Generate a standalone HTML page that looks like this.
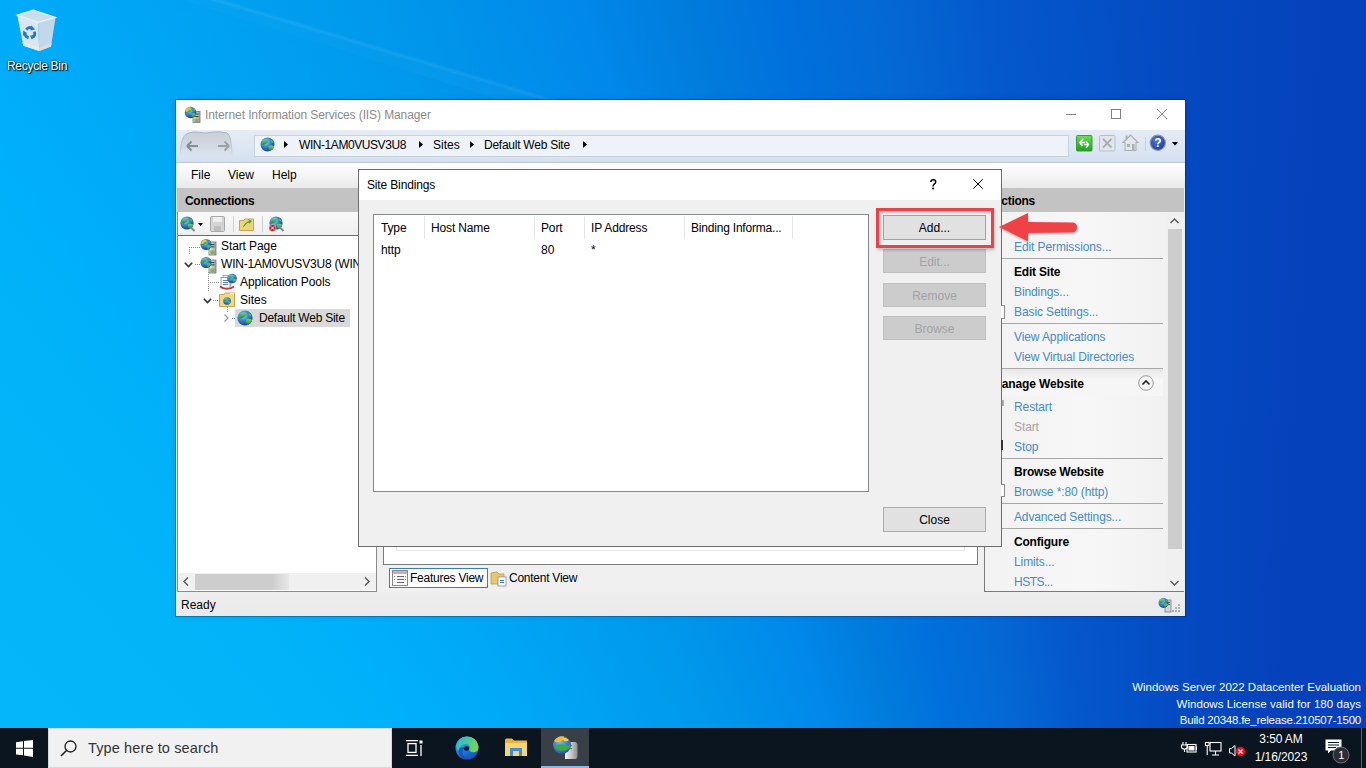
<!DOCTYPE html>
<html><head><meta charset="utf-8">
<style>
*{box-sizing:border-box;margin:0;padding:0}
html,body{width:1366px;height:768px;overflow:hidden}
body{font-family:"Liberation Sans", sans-serif;font-size:12px;color:#000;position:relative;background:#0a78e6}
.a{position:absolute}
.t{position:absolute;white-space:nowrap;line-height:1}
svg.a{overflow:visible}
</style></head><body>
<div class="a" style="left:0px;top:0px;width:1366px;height:728px;background:conic-gradient(from 300deg at 1200px 1800px, #02bafb 0deg, #02b6f9 16deg, #01b3f8 21deg, #00affa 24deg, #00a8f6 28deg, #0097eb 36deg, #0088ea 41deg, #007cdc 44deg, #0070dc 47deg, #0468d4 50deg, #0458cc 53.5deg, #0448c0 60deg, #0442bc 64deg, #0440b8 80deg, #00b8fc 360deg)"></div>
<svg class="a" style="left:0px;top:0px" width="1366" height="728" viewBox="0 0 1366 728"><defs><filter id="blr" x="-10%" y="-50%" width="120%" height="200%"><feGaussianBlur stdDeviation="1.2"/></filter>
<linearGradient id="wedge" x1="0" y1="0" x2="0.3" y2="-1"><stop offset="0" stop-color="#fff" stop-opacity="0"/><stop offset="1" stop-color="#fff" stop-opacity="0.045"/></linearGradient></defs>
<path d="M184 -10 L620 122 L570 122 L150 -10Z" fill="#fff" opacity="0.018"/>
<path d="M190 -8 L600 115" stroke="#fff" stroke-opacity="0.11" stroke-width="2" filter="url(#blr)"/></svg>
<svg class="a" style="left:16px;top:8px" width="42" height="46" viewBox="0 0 42 46">
<path d="M1.2 7.1 L22 14.3 L23.3 42.9 L7.4 37.7 Z" fill="#d9e7f2"/>
<path d="M22 14.3 L39.6 9.4 L35 38.4 L23.3 42.9 Z" fill="#c2d7e8"/>
<path d="M1.2 7.1 L17.5 2.2 L39.6 9.4 L22 14.3 Z" fill="#c9dded" stroke="#eef5fb" stroke-width="1.1"/>
<path d="M6.3 34.5 L23 39.5 L23.3 42.9 L7.4 37.7 Z" fill="#ebe8ea"/>
<path d="M23 39.5 L35.5 35 L35 38.4 L23.3 42.9 Z" fill="#dcdde2"/>
<g fill="none" stroke="#1f78d0" stroke-width="2.8" stroke-linecap="butt">
<path d="M10.2 21.6 A5 5 0 0 1 16.4 20.2"/>
<path d="M18.4 23.6 A5 5 0 0 1 16 29.6"/>
<path d="M12.6 29.8 A5 5 0 0 1 8.8 25.2"/>
</g>
<g fill="#1f78d0"><path d="M15.2 17.6 L19.2 21.4 L14.6 22.6Z"/><path d="M19.8 27.2 L15.6 31.6 L14.2 27.4Z"/><path d="M7 28 L7.2 22.6 L11 25Z"/></g></svg>
<div class="t" style="left:7px;top:59.84px;font-size:12px;color:#fff;text-shadow:0 0 2px #000,1px 1px 1px #000;letter-spacing:-0.3px">Recycle Bin</div>
<div class="t" style="right:5px;top:682.27px;font-size:11.5px;color:#fff;">Windows Server 2022 Datacenter Evaluation</div>
<div class="t" style="right:5px;top:698.77px;font-size:11.5px;color:#fff;letter-spacing:0.05px;">Windows License valid for 180 days</div>
<div class="t" style="right:5px;top:714.77px;font-size:11.5px;color:#fff;letter-spacing:-0.22px;">Build 20348.fe_release.210507-1500</div>
<div class="a" style="left:175px;top:99px;width:1011px;height:518px;background:#f0f0f0;background-clip:padding-box;border:1px solid rgba(0,20,70,0.3);box-shadow:0 0 5px rgba(0,0,0,0.1)"></div>
<div class="a" style="left:176px;top:100px;width:1009px;height:30px;background:#fff"></div>
<div class="t" style="left:205px;top:108.84px;font-size:12px;color:#8a8a8a;letter-spacing:-0.1px;">Internet Information Services (IIS) Manager</div>
<div class="a" style="left:1066px;top:114px;width:10px;height:1px;background:#808080"></div>
<div class="a" style="left:1111px;top:109px;width:10px;height:10px;border:1px solid #808080"></div>
<svg class="a" style="left:1157px;top:109px" width="10" height="10" viewBox="0 0 10 10"><path d="M0 0 L10 10 M10 0 L0 10" stroke="#8a8a8a" stroke-width="1"/></svg>
<div class="a" style="left:176px;top:130px;width:1009px;height:33px;background:linear-gradient(#e6ecf5,#d6e0f0);border-bottom:1px solid #bcc8d6"></div>
<svg class="a" style="left:179px;top:130px" width="56" height="31" viewBox="0 0 56 31"><defs><linearGradient id="nvb" x1="0" y1="0" x2="0" y2="1"><stop offset="0" stop-color="#c9d0d8"/><stop offset="0.6" stop-color="#d3dae3"/><stop offset="1" stop-color="#dbe3ed" stop-opacity="0"/></linearGradient>
<linearGradient id="nvs" x1="0" y1="0" x2="0" y2="1"><stop offset="0" stop-color="#aab2bb"/><stop offset="0.7" stop-color="#c5ccd4"/><stop offset="1" stop-color="#dbe3ed" stop-opacity="0"/></linearGradient></defs>
<path d="M1.5 28 Q0.5 8 8 3.5 Q14 1.2 22 2.5 Q27 3.5 31 2.5 Q41 0.8 48 3 Q53 6 53 28" fill="url(#nvb)" stroke="url(#nvs)" stroke-width="1"/>
<path d="M8 16 L19 16 M8 16 L12.5 11.5 M8 16 L12.5 20.5" stroke="#878d95" stroke-width="2" fill="none"/>
<path d="M50 16 L39 16 M50 16 L45.5 11.5 M50 16 L45.5 20.5" stroke="#9ba1a8" stroke-width="2" fill="none"/></svg>
<div class="a" style="left:254px;top:135px;width:815px;height:22px;background:#eef3f9;border:1px solid #c9d3de"></div>
<svg class="a" style="left:260px;top:137px" width="15" height="15" viewBox="0 0 15 15"><defs><radialGradient id="glg1" cx="38%" cy="32%" r="72%"><stop offset="0" stop-color="#a8dcfa"/><stop offset="0.45" stop-color="#3a8ad6"/><stop offset="1" stop-color="#143c80"/></radialGradient>
<linearGradient id="gll1" x1="0" y1="0" x2="0" y2="1"><stop offset="0" stop-color="#6fd46a"/><stop offset="1" stop-color="#1f8a2a"/></linearGradient></defs>
<circle cx="7.5" cy="7.5" r="7.0" fill="url(#glg1)"/>
<path d="M1.90 5.63 Q4.23 1.90 7.97 2.55 Q9.37 4.23 7.50 6.10 Q5.17 7.78 2.55 7.97Z" fill="url(#gll1)"/>
<path d="M8.43 8.90 Q11.70 7.50 14.13 9.37 Q13.10 13.10 9.83 13.85 Q7.97 11.70 8.43 8.90Z" fill="url(#gll1)"/>
<path d="M10.77 2.37 Q13.10 3.77 13.75 6.10 Q12.17 6.29 10.95 4.70Z" fill="#4fbf4a"/></svg>
<svg class="a" style="left:284px;top:141px" width="4" height="7" viewBox="0 0 4 7"><path d="M0 0 L4 3.5 L0 7Z" fill="#000"/></svg>
<div class="t" style="left:299px;top:138.84px;font-size:12px;color:#000;letter-spacing:-0.43px;">WIN-1AM0VUSV3U8</div>
<svg class="a" style="left:419px;top:141px" width="4" height="7" viewBox="0 0 4 7"><path d="M0 0 L4 3.5 L0 7Z" fill="#000"/></svg>
<div class="t" style="left:433px;top:138.84px;font-size:12px;color:#000;">Sites</div>
<svg class="a" style="left:470px;top:141px" width="4" height="7" viewBox="0 0 4 7"><path d="M0 0 L4 3.5 L0 7Z" fill="#000"/></svg>
<div class="t" style="left:484px;top:138.84px;font-size:12px;color:#000;letter-spacing:-0.25px;">Default Web Site</div>
<svg class="a" style="left:583px;top:141px" width="4" height="7" viewBox="0 0 4 7"><path d="M0 0 L4 3.5 L0 7Z" fill="#000"/></svg>
<svg class="a" style="left:1076px;top:135px" width="17" height="17" viewBox="0 0 17 17"><defs><linearGradient id="grn" x1="0" y1="0" x2="0" y2="1"><stop offset="0" stop-color="#6fdc5a"/><stop offset="1" stop-color="#16a316"/></linearGradient></defs>
<rect x="0.5" y="0.5" width="15.5" height="15.5" rx="1" fill="url(#grn)" stroke="#3b9b3b"/>
<path d="M7 4 L4 7.5 L6.5 11 M4 7.5 L9 7.5" stroke="#fff" stroke-width="1.7" fill="none"/><path d="M10 13 L12.5 9.5 L10 6.5 M12.5 9.5 L8 9.5" stroke="#fff" stroke-width="1.5" fill="none" opacity="0.9"/></svg>
<svg class="a" style="left:1099px;top:135px" width="17" height="17" viewBox="0 0 17 17"><rect x="0.5" y="0.5" width="15.5" height="15.5" rx="1" fill="#e2e6eb" stroke="#b9bfc6"/>
<path d="M4 4 L12.5 12.5 M12.5 4 L4 12.5" stroke="#a8aeb5" stroke-width="1.8"/></svg>
<svg class="a" style="left:1121px;top:133px" width="19" height="19" viewBox="0 0 19 19"><path d="M2 9.5 L9.5 2 L17 9.5 L15 9.5 L15 17.5 L4 17.5 L4 9.5Z" fill="#e4e7ea" stroke="#a9afb5" stroke-width="1.1"/>
<rect x="6" y="11" width="3" height="3" fill="#a9afb5"/><rect x="11" y="11" width="2.5" height="6" fill="#a9afb5"/><rect x="4.5" y="2.5" width="2" height="4" fill="#a9afb5"/></svg>
<div class="a" style="left:1145px;top:137px;width:1px;height:14px;background:#c8d0d8"></div>
<svg class="a" style="left:1149px;top:134px" width="18" height="18" viewBox="0 0 18 18"><defs><radialGradient id="hlp" cx="40%" cy="35%" r="70%"><stop offset="0" stop-color="#4a78d8"/><stop offset="1" stop-color="#1c3d95"/></radialGradient></defs>
<circle cx="8.8" cy="8.8" r="7.6" fill="url(#hlp)" stroke="#8a96b8" stroke-width="1.2"/>
<text x="8.8" y="13.2" font-family="Liberation Sans" font-weight="700" font-size="12" fill="#fff" text-anchor="middle">?</text></svg>
<svg class="a" style="left:1172px;top:142px" width="6" height="4" viewBox="0 0 6 4"><path d="M0 0 L6 0 L3 3.5Z" fill="#000"/></svg>
<div class="a" style="left:176px;top:163px;width:1009px;height:25px;background:linear-gradient(#fefefe,#f6f5f5 50%,#e9e9e9)"></div>
<div class="t" style="left:191px;top:168.84px;font-size:12px;color:#000;">File</div>
<div class="t" style="left:228px;top:168.84px;font-size:12px;color:#000;">View</div>
<div class="t" style="left:272px;top:168.84px;font-size:12px;color:#000;">Help</div>
<div class="a" style="left:176px;top:592px;width:1009px;height:24px;background:linear-gradient(#eeeeee,#e9e9e9)"></div>
<div class="t" style="left:181px;top:598.84px;font-size:12px;color:#000;">Ready</div>
<div class="a" style="left:177px;top:188px;width:200px;height:404px;background:#fff;border:1px solid #8a8a8a;border-top:none"></div>
<div class="a" style="left:177px;top:188px;width:200px;height:24px;background:#c3c3c3"></div>
<div class="t" style="left:185px;top:194.84px;font-size:12px;color:#000;font-weight:700;letter-spacing:-0.3px;">Connections</div>
<div class="a" style="left:178px;top:212px;width:198px;height:24px;background:linear-gradient(#fafafa,#efefef);border-bottom:1px solid #6a6a6a"></div>
<svg class="a" style="left:180px;top:216px" width="16" height="16" viewBox="0 0 16 16"><defs><radialGradient id="glg2" cx="38%" cy="32%" r="72%"><stop offset="0" stop-color="#a8dcfa"/><stop offset="0.45" stop-color="#3a8ad6"/><stop offset="1" stop-color="#143c80"/></radialGradient>
<linearGradient id="gll2" x1="0" y1="0" x2="0" y2="1"><stop offset="0" stop-color="#6fd46a"/><stop offset="1" stop-color="#1f8a2a"/></linearGradient></defs>
<circle cx="7" cy="7" r="6.6" fill="url(#glg2)"/>
<path d="M1.72 5.24 Q3.92 1.72 7.44 2.34 Q8.76 3.92 7.00 5.68 Q4.80 7.26 2.34 7.44Z" fill="url(#gll2)"/>
<path d="M7.88 8.32 Q10.96 7.00 13.25 8.76 Q12.28 12.28 9.20 12.98 Q7.44 10.96 7.88 8.32Z" fill="url(#gll2)"/>
<path d="M10.08 2.16 Q12.28 3.48 12.90 5.68 Q11.40 5.86 10.26 4.36Z" fill="#4fbf4a"/><path d="M10.5 11 L14.5 15" stroke="#7a8a9a" stroke-width="2"/></svg>
<svg class="a" style="left:198px;top:223px" width="5" height="3" viewBox="0 0 5 3"><path d="M0 0 L5 0 L2.5 3Z" fill="#000"/></svg>
<svg class="a" style="left:210px;top:216px" width="15" height="16" viewBox="0 0 15 16"><rect x="0.5" y="0.5" width="14" height="15" rx="1" fill="#d4d4d4" stroke="#a9a9a9"/>
<rect x="3" y="1" width="9" height="5" fill="#efefef"/><rect x="4" y="10" width="7" height="5" fill="#bdbdbd"/></svg>
<div class="a" style="left:233px;top:216px;width:1px;height:16px;background:#cfcfcf"></div>
<svg class="a" style="left:239px;top:217px" width="15" height="14" viewBox="0 0 15 14"><path d="M0.5 3.5 L5 3.5 L6 2 L14.5 2 L14.5 13.5 L0.5 13.5Z" fill="#f1d27a" stroke="#c9a548"/>
<path d="M4 10 Q6 5 10 4 L9 2 L13 4 L10 7 L10 5.5 Q7 6 5 10Z" fill="#3daa33"/></svg>
<div class="a" style="left:262px;top:216px;width:1px;height:16px;background:#cfcfcf"></div>
<svg class="a" style="left:268px;top:216px" width="16" height="16" viewBox="0 0 16 16"><defs><radialGradient id="glg3" cx="38%" cy="32%" r="72%"><stop offset="0" stop-color="#a8dcfa"/><stop offset="0.45" stop-color="#3a8ad6"/><stop offset="1" stop-color="#143c80"/></radialGradient>
<linearGradient id="gll3" x1="0" y1="0" x2="0" y2="1"><stop offset="0" stop-color="#6fd46a"/><stop offset="1" stop-color="#1f8a2a"/></linearGradient></defs>
<circle cx="8" cy="7" r="6.6" fill="url(#glg3)"/>
<path d="M2.72 5.24 Q4.92 1.72 8.44 2.34 Q9.76 3.92 8.00 5.68 Q5.80 7.26 3.34 7.44Z" fill="url(#gll3)"/>
<path d="M8.88 8.32 Q11.96 7.00 14.25 8.76 Q13.28 12.28 10.20 12.98 Q8.44 10.96 8.88 8.32Z" fill="url(#gll3)"/>
<path d="M11.08 2.16 Q13.28 3.48 13.90 5.68 Q12.40 5.86 11.26 4.36Z" fill="#4fbf4a"/><path d="M11.5 11 L15.5 15" stroke="#7a8a9a" stroke-width="2"/>
<circle cx="4.5" cy="12" r="3.6" fill="#c8202a" stroke="#fff" stroke-width="0.5"/><path d="M3 10.5 L6 13.5 M6 10.5 L3 13.5" stroke="#fff" stroke-width="1"/></svg>
<div class="a" style="left:189px;top:247px;width:11px;height:1px;background-image:linear-gradient(90deg,#888 50%,transparent 50%);background-size:2px 1px"></div>
<div class="a" style="left:189px;top:247px;width:1px;height:8px;background-image:linear-gradient(#888 50%,transparent 50%);background-size:1px 2px"></div>
<svg class="a" style="left:200px;top:238px" width="18" height="18" viewBox="0 0 18 18"><defs><linearGradient id="sv200238" x1="0" y1="0" x2="1" y2="0"><stop offset="0" stop-color="#e8eaec"/><stop offset="1" stop-color="#9ea4aa"/></linearGradient></defs>
<rect x="9" y="4" width="7" height="13" fill="url(#sv200238)" stroke="#6f757c" stroke-width="0.8"/>
<rect x="10.5" y="6" width="4" height="1.1" fill="#444"/><rect x="10.5" y="8.3" width="4" height="1.1" fill="#444"/><rect x="10.3" y="12.5" width="4.5" height="3.8" fill="#8fae5a"/><defs><radialGradient id="glg4" cx="38%" cy="32%" r="72%"><stop offset="0" stop-color="#a8dcfa"/><stop offset="0.45" stop-color="#3a8ad6"/><stop offset="1" stop-color="#143c80"/></radialGradient>
<linearGradient id="gll4" x1="0" y1="0" x2="0" y2="1"><stop offset="0" stop-color="#6fd46a"/><stop offset="1" stop-color="#1f8a2a"/></linearGradient></defs>
<circle cx="6" cy="6.5" r="5.5" fill="url(#glg4)"/>
<path d="M1.60 5.03 Q3.43 2.10 6.37 2.61 Q7.47 3.93 6.00 5.40 Q4.17 6.72 2.11 6.87Z" fill="url(#gll4)"/>
<path d="M6.73 7.60 Q9.30 6.50 11.21 7.97 Q10.40 10.90 7.83 11.49 Q6.37 9.80 6.73 7.60Z" fill="url(#gll4)"/>
<path d="M8.57 2.47 Q10.40 3.57 10.91 5.40 Q9.67 5.55 8.71 4.30Z" fill="#4fbf4a"/><path d="M1.09 5.40 Q1.60 2.10 4.90 1.44 Q6.73 1.73 6.51 3.57 Q4.17 3.79 3.07 6.13Z" fill="#f5c02a"/></svg>
<div class="t" style="left:221px;top:239.84px;font-size:12px;color:#000;letter-spacing:-0.1px;">Start Page</div>
<svg class="a" style="left:184px;top:262px" width="9" height="6" viewBox="0 0 9 6"><path d="M0.8 0.8 L4.5 4.5 L8.2 0.8" stroke="#333" stroke-width="1.6" fill="none"/></svg>
<div class="a" style="left:195px;top:264px;width:6px;height:1px;background-image:linear-gradient(90deg,#888 50%,transparent 50%);background-size:2px 1px"></div>
<svg class="a" style="left:200px;top:256px" width="18" height="18" viewBox="0 0 18 18"><defs><linearGradient id="sv200256" x1="0" y1="0" x2="1" y2="0"><stop offset="0" stop-color="#e8eaec"/><stop offset="1" stop-color="#9ea4aa"/></linearGradient></defs>
<rect x="9" y="4" width="7" height="13" fill="url(#sv200256)" stroke="#6f757c" stroke-width="0.8"/>
<rect x="10.5" y="6" width="4" height="1.1" fill="#444"/><rect x="10.5" y="8.3" width="4" height="1.1" fill="#444"/><rect x="10.3" y="12.5" width="4.5" height="3.8" fill="#8fae5a"/><defs><radialGradient id="glg5" cx="38%" cy="32%" r="72%"><stop offset="0" stop-color="#a8dcfa"/><stop offset="0.45" stop-color="#3a8ad6"/><stop offset="1" stop-color="#143c80"/></radialGradient>
<linearGradient id="gll5" x1="0" y1="0" x2="0" y2="1"><stop offset="0" stop-color="#6fd46a"/><stop offset="1" stop-color="#1f8a2a"/></linearGradient></defs>
<circle cx="6" cy="6.5" r="5.5" fill="url(#glg5)"/>
<path d="M1.60 5.03 Q3.43 2.10 6.37 2.61 Q7.47 3.93 6.00 5.40 Q4.17 6.72 2.11 6.87Z" fill="url(#gll5)"/>
<path d="M6.73 7.60 Q9.30 6.50 11.21 7.97 Q10.40 10.90 7.83 11.49 Q6.37 9.80 6.73 7.60Z" fill="url(#gll5)"/>
<path d="M8.57 2.47 Q10.40 3.57 10.91 5.40 Q9.67 5.55 8.71 4.30Z" fill="#4fbf4a"/></svg>
<div class="t" style="left:221px;top:257.84px;font-size:12px;color:#000;letter-spacing:-0.2px;">WIN-1AM0VUSV3U8 (WIN</div>
<div class="a" style="left:208px;top:272px;width:1px;height:20px;background-image:linear-gradient(#888 50%,transparent 50%);background-size:1px 2px"></div>
<div class="a" style="left:208px;top:282px;width:11px;height:1px;background-image:linear-gradient(90deg,#888 50%,transparent 50%);background-size:2px 1px"></div>
<svg class="a" style="left:219px;top:273px" width="18" height="17" viewBox="0 0 18 17"><rect x="4" y="2.5" width="8" height="10" fill="#f6f6f6" stroke="#9a9a9a" stroke-width="0.8"/>
<rect x="2" y="4.5" width="9" height="10.5" fill="#fafafa" stroke="#8a8a8a" stroke-width="0.8"/>
<rect x="4" y="7" width="5" height="1" fill="#5a7fb0"/><rect x="4" y="9" width="5" height="1" fill="#5a7fb0"/><rect x="4" y="11" width="5" height="1" fill="#5a7fb0"/><defs><radialGradient id="glg6" cx="38%" cy="32%" r="72%"><stop offset="0" stop-color="#a8dcfa"/><stop offset="0.45" stop-color="#3a8ad6"/><stop offset="1" stop-color="#143c80"/></radialGradient>
<linearGradient id="gll6" x1="0" y1="0" x2="0" y2="1"><stop offset="0" stop-color="#6fd46a"/><stop offset="1" stop-color="#1f8a2a"/></linearGradient></defs>
<circle cx="13" cy="5.5" r="4.8" fill="url(#glg6)"/>
<path d="M9.16 4.22 Q10.76 1.66 13.32 2.11 Q14.28 3.26 13.00 4.54 Q11.40 5.69 9.61 5.82Z" fill="url(#gll6)"/>
<path d="M13.64 6.46 Q15.88 5.50 17.54 6.78 Q16.84 9.34 14.60 9.85 Q13.32 8.38 13.64 6.46Z" fill="url(#gll6)"/>
<path d="M15.24 1.98 Q16.84 2.94 17.29 4.54 Q16.20 4.67 15.37 3.58Z" fill="#4fbf4a"/>
<path d="M1 13.5 Q8 18.5 15 13.5" stroke="#c0392b" stroke-width="1.6" fill="none"/></svg>
<div class="t" style="left:240px;top:275.84px;font-size:12px;color:#000;letter-spacing:-0.1px;">Application Pools</div>
<svg class="a" style="left:203px;top:298px" width="9" height="6" viewBox="0 0 9 6"><path d="M0.8 0.8 L4.5 4.5 L8.2 0.8" stroke="#333" stroke-width="1.6" fill="none"/></svg>
<div class="a" style="left:213px;top:300px;width:6px;height:1px;background-image:linear-gradient(90deg,#888 50%,transparent 50%);background-size:2px 1px"></div>
<svg class="a" style="left:219px;top:292px" width="16" height="15" viewBox="0 0 16 15"><path d="M0.5 2.5 L5 2.5 L6 1 L15.5 1 L15.5 14.5 L0.5 14.5Z" fill="#f3d789" stroke="#c9a548"/>
<path d="M11 1.5 L14.5 1.5 L14.5 4" stroke="#fff" stroke-width="0.8" fill="none"/><defs><radialGradient id="glg7" cx="38%" cy="32%" r="72%"><stop offset="0" stop-color="#a8dcfa"/><stop offset="0.45" stop-color="#3a8ad6"/><stop offset="1" stop-color="#143c80"/></radialGradient>
<linearGradient id="gll7" x1="0" y1="0" x2="0" y2="1"><stop offset="0" stop-color="#6fd46a"/><stop offset="1" stop-color="#1f8a2a"/></linearGradient></defs>
<circle cx="8" cy="9" r="3.8" fill="url(#glg7)"/>
<path d="M4.96 7.99 Q6.23 5.96 8.25 6.31 Q9.01 7.23 8.00 8.24 Q6.73 9.15 5.31 9.25Z" fill="url(#gll7)"/>
<path d="M8.51 9.76 Q10.28 9.00 11.60 10.01 Q11.04 12.04 9.27 12.45 Q8.25 11.28 8.51 9.76Z" fill="url(#gll7)"/>
<path d="M9.77 6.21 Q11.04 6.97 11.39 8.24 Q10.53 8.34 9.87 7.48Z" fill="#4fbf4a"/></svg>
<div class="t" style="left:240px;top:293.84px;font-size:12px;color:#000;">Sites</div>
<div class="a" style="left:227px;top:307px;width:1px;height:6px;background-image:linear-gradient(#888 50%,transparent 50%);background-size:1px 2px"></div>
<svg class="a" style="left:224px;top:314px" width="5" height="8" viewBox="0 0 5 8"><path d="M0.5 0.5 L4 4 L0.5 7.5" stroke="#999" stroke-width="1.2" fill="none"/></svg>
<div class="a" style="left:232px;top:318px;width:4px;height:1px;background-image:linear-gradient(90deg,#888 50%,transparent 50%);background-size:2px 1px"></div>
<div class="a" style="left:235px;top:309px;width:115px;height:18px;background:#d9d9d9"></div>
<svg class="a" style="left:237px;top:310px" width="16" height="16" viewBox="0 0 16 16"><defs><radialGradient id="glg8" cx="38%" cy="32%" r="72%"><stop offset="0" stop-color="#a8dcfa"/><stop offset="0.45" stop-color="#3a8ad6"/><stop offset="1" stop-color="#143c80"/></radialGradient>
<linearGradient id="gll8" x1="0" y1="0" x2="0" y2="1"><stop offset="0" stop-color="#6fd46a"/><stop offset="1" stop-color="#1f8a2a"/></linearGradient></defs>
<circle cx="8" cy="8" r="7.6" fill="url(#glg8)"/>
<path d="M1.92 5.97 Q4.45 1.92 8.51 2.63 Q10.03 4.45 8.00 6.48 Q5.47 8.30 2.63 8.51Z" fill="url(#gll8)"/>
<path d="M9.01 9.52 Q12.56 8.00 15.19 10.03 Q14.08 14.08 10.53 14.89 Q8.51 12.56 9.01 9.52Z" fill="url(#gll8)"/>
<path d="M11.55 2.43 Q14.08 3.95 14.79 6.48 Q13.07 6.68 11.75 4.96Z" fill="#4fbf4a"/></svg>
<div class="t" style="left:259px;top:311.84px;font-size:12px;color:#000;letter-spacing:-0.25px;">Default Web Site</div>
<div class="a" style="left:178px;top:573px;width:198px;height:17px;background:#f0f0f0"></div>
<div class="a" style="left:195px;top:574px;width:94px;height:16px;background:linear-gradient(90deg,#cdcdcd 82%,#e8e8e8)"></div>
<svg class="a" style="left:183px;top:577px" width="6" height="9" viewBox="0 0 6 9"><path d="M5 0.5 L1 4.5 L5 8.5" stroke="#555" stroke-width="1.4" fill="none"/></svg>
<svg class="a" style="left:364px;top:577px" width="6" height="9" viewBox="0 0 6 9"><path d="M1 0.5 L5 4.5 L1 8.5" stroke="#555" stroke-width="1.4" fill="none"/></svg>
<div class="a" style="left:383px;top:188px;width:595px;height:377px;background:#fff;border:1px solid #7a7a7a"></div>
<div class="a" style="left:396px;top:300px;width:569px;height:251px;border:1px solid #e6e6e6;border-top:none"></div>
<div class="a" style="left:389px;top:568px;width:99px;height:20px;background:#fff;border:1px solid #3c7fb1"></div>
<svg class="a" style="left:392px;top:570px" width="16" height="16" viewBox="0 0 16 16"><rect x="0.5" y="0.5" width="15" height="15" fill="#fafafa" stroke="#8a8a8a"/>
<rect x="1" y="1" width="14" height="3" fill="#b8b8b8"/><rect x="5" y="6" width="7" height="1" fill="#666"/><rect x="5" y="9" width="7" height="1" fill="#666"/><rect x="5" y="12" width="7" height="1" fill="#666"/>
<rect x="2" y="6" width="1" height="1" fill="#888"/><rect x="2" y="9" width="1" height="1" fill="#888"/><rect x="13" y="6" width="1" height="1" fill="#888"/><rect x="13" y="9" width="1" height="1" fill="#888"/></svg>
<div class="t" style="left:410px;top:571.84px;font-size:12px;color:#000;letter-spacing:-0.25px;">Features View</div>
<svg class="a" style="left:490px;top:569px" width="18" height="18" viewBox="0 0 18 18"><path d="M1 4 L7 3 L9 5 L14 5 L14 15 L1 15Z" fill="#e8c86a" stroke="#b99a45" stroke-width="0.8"/>
<rect x="8" y="8" width="8" height="9" fill="#fff" stroke="#7f8ea0" stroke-width="0.8"/><rect x="10" y="11" width="4" height="1" fill="#3a6fb0"/><rect x="10" y="13" width="4" height="1" fill="#3a6fb0"/></svg>
<div class="t" style="left:509px;top:571.84px;font-size:12px;color:#000;letter-spacing:-0.25px;">Content View</div>
<div class="a" style="left:984px;top:188px;width:200px;height:404px;background:linear-gradient(90deg,#f2f2f2,#f7f7f7 50%,#f0f0f0);border:1px solid #7a7a7a;border-top:none;border-right:none"></div>
<div class="a" style="left:984px;top:188px;width:200px;height:24px;background:#c3c3c3"></div>
<div class="t" style="left:993px;top:194.84px;font-size:12px;color:#000;font-weight:700;letter-spacing:-0.3px;">Actions</div>
<div class="a" style="left:1167px;top:213px;width:16px;height:377px;background:#f0f0f0"></div>
<div class="a" style="left:1168px;top:229px;width:14px;height:320px;background:#cdcdcd"></div>
<svg class="a" style="left:1170px;top:218px" width="9" height="6" viewBox="0 0 9 6"><path d="M0.5 5 L4.5 1 L8.5 5" stroke="#555" stroke-width="1.4" fill="none"/></svg>
<svg class="a" style="left:1170px;top:580px" width="9" height="6" viewBox="0 0 9 6"><path d="M0.5 1 L4.5 5 L8.5 1" stroke="#555" stroke-width="1.4" fill="none"/></svg>
<div class="t" style="left:1014px;top:240.84px;font-size:12px;color:#468bc6;letter-spacing:-0.1px;">Edit Permissions...</div>
<div class="a" style="left:1001px;top:258px;width:162px;height:1px;background:#a8a8a8"></div>
<div class="t" style="left:1014px;top:265.84px;font-size:12px;color:#000;font-weight:700;letter-spacing:-0.2px;">Edit Site</div>
<div class="t" style="left:1014px;top:285.84px;font-size:12px;color:#468bc6;letter-spacing:-0.1px;">Bindings...</div>
<div class="t" style="left:1014px;top:305.84px;font-size:12px;color:#468bc6;letter-spacing:-0.1px;">Basic Settings...</div>
<div class="a" style="left:1001px;top:323px;width:162px;height:1px;background:#a8a8a8"></div>
<div class="t" style="left:1014px;top:330.84px;font-size:12px;color:#468bc6;letter-spacing:-0.1px;">View Applications</div>
<div class="t" style="left:1014px;top:350.84px;font-size:12px;color:#468bc6;letter-spacing:-0.15px;">View Virtual Directories</div>
<div class="a" style="left:1001px;top:368px;width:162px;height:1px;background:#a8a8a8"></div>
<div class="a" style="left:1001px;top:369px;width:162px;height:27px;background:linear-gradient(#e8e8e8,#f6f6f6 40%,#f6f6f6)"></div>
<div class="t" style="left:992px;top:377.84px;font-size:12px;color:#000;font-weight:700;letter-spacing:-0.15px;">Manage Website</div>
<svg class="a" style="left:1138px;top:375px" width="16" height="16" viewBox="0 0 16 16"><circle cx="8" cy="8" r="7.3" fill="#f4f4f4" stroke="#9a9a9a"/><path d="M4.5 9.5 L8 6 L11.5 9.5" stroke="#222" stroke-width="1.6" fill="none"/></svg>
<div class="t" style="left:1014px;top:400.84px;font-size:12px;color:#468bc6;letter-spacing:-0.1px;">Restart</div>
<div class="t" style="left:1014px;top:420.84px;font-size:12px;color:#a6a6a6;letter-spacing:-0.1px;">Start</div>
<div class="t" style="left:1014px;top:440.84px;font-size:12px;color:#468bc6;letter-spacing:-0.1px;">Stop</div>
<div class="a" style="left:1001px;top:458px;width:162px;height:1px;background:#a8a8a8"></div>
<div class="t" style="left:1014px;top:465.84px;font-size:12px;color:#000;font-weight:700;letter-spacing:-0.2px;">Browse Website</div>
<div class="t" style="left:1014px;top:485.84px;font-size:12px;color:#468bc6;letter-spacing:-0.1px;">Browse *:80 (http)</div>
<div class="a" style="left:1001px;top:503px;width:162px;height:1px;background:#a8a8a8"></div>
<div class="t" style="left:1014px;top:510.84px;font-size:12px;color:#468bc6;letter-spacing:-0.15px;">Advanced Settings...</div>
<div class="a" style="left:1001px;top:528px;width:162px;height:1px;background:#a8a8a8"></div>
<div class="t" style="left:1014px;top:535.84px;font-size:12px;color:#000;font-weight:700;letter-spacing:-0.2px;">Configure</div>
<div class="t" style="left:1014px;top:555.84px;font-size:12px;color:#468bc6;letter-spacing:-0.1px;">Limits...</div>
<div class="t" style="left:1014px;top:575.84px;font-size:12px;color:#468bc6;letter-spacing:-0.5px;">HSTS...</div>
<svg class="a" style="left:1158px;top:597px" width="24" height="17" viewBox="0 0 24 17"><rect x="7" y="3" width="6" height="12" fill="#cfd3d8" stroke="#7b8088" stroke-width="0.8"/><rect x="8" y="5" width="4" height="1" fill="#555"/><rect x="8" y="7" width="4" height="1" fill="#555"/><defs><radialGradient id="glg9" cx="38%" cy="32%" r="72%"><stop offset="0" stop-color="#a8dcfa"/><stop offset="0.45" stop-color="#3a8ad6"/><stop offset="1" stop-color="#143c80"/></radialGradient>
<linearGradient id="gll9" x1="0" y1="0" x2="0" y2="1"><stop offset="0" stop-color="#6fd46a"/><stop offset="1" stop-color="#1f8a2a"/></linearGradient></defs>
<circle cx="5.5" cy="6" r="5" fill="url(#glg9)"/>
<path d="M1.50 4.67 Q3.17 2.00 5.83 2.47 Q6.83 3.67 5.50 5.00 Q3.83 6.20 1.97 6.33Z" fill="url(#gll9)"/>
<path d="M6.17 7.00 Q8.50 6.00 10.23 7.33 Q9.50 10.00 7.17 10.53 Q5.83 9.00 6.17 7.00Z" fill="url(#gll9)"/>
<path d="M7.83 2.33 Q9.50 3.33 9.97 5.00 Q8.83 5.13 7.97 4.00Z" fill="#4fbf4a"/>
<g fill="#b0b0b0"><rect x="20" y="7" width="2" height="2"/><rect x="17" y="10" width="2" height="2"/><rect x="20" y="10" width="2" height="2"/><rect x="20" y="13" width="2" height="2"/><rect x="17" y="13" width="2" height="2"/><rect x="14" y="13" width="2" height="2"/></g></svg>
<div class="a" style="left:358px;top:169px;width:644px;height:378px;background:#f0f0f0;border:1px solid #6e6e6e"></div>
<div class="a" style="left:359px;top:170px;width:642px;height:30px;background:#fff"></div>
<div class="t" style="left:367px;top:178.84px;font-size:12px;color:#000;letter-spacing:-0.15px;">Site Bindings</div>
<svg class="a" style="left:930px;top:179px" width="7" height="11" viewBox="0 0 7 11"><path d="M0.9 2.9 Q0.9 0.8 3.3 0.8 Q5.7 0.8 5.7 2.9 Q5.7 4.2 4.2 5.1 Q3.1 5.8 3.1 7.4" stroke="#000" stroke-width="1.5" fill="none"/><circle cx="3.1" cy="9.4" r="1" fill="#000"/></svg>
<svg class="a" style="left:973px;top:179px" width="10" height="10" viewBox="0 0 10 10"><path d="M0.3 0.3 L9.7 9.7 M9.7 0.3 L0.3 9.7" stroke="#000" stroke-width="1"/></svg>
<div class="a" style="left:373px;top:214px;width:496px;height:278px;background:#fff;border:1px solid #828790"></div>
<div class="a" style="left:424px;top:216px;width:1px;height:23px;background:#e5e5e5"></div>
<div class="a" style="left:534px;top:216px;width:1px;height:23px;background:#e5e5e5"></div>
<div class="a" style="left:584px;top:216px;width:1px;height:23px;background:#e5e5e5"></div>
<div class="a" style="left:684px;top:216px;width:1px;height:23px;background:#e5e5e5"></div>
<div class="a" style="left:792px;top:216px;width:1px;height:23px;background:#e5e5e5"></div>
<div class="t" style="left:381px;top:221.84px;font-size:12px;color:#000;letter-spacing:-0.15px;">Type</div>
<div class="t" style="left:431px;top:221.84px;font-size:12px;color:#000;letter-spacing:-0.15px;">Host Name</div>
<div class="t" style="left:541px;top:221.84px;font-size:12px;color:#000;letter-spacing:-0.15px;">Port</div>
<div class="t" style="left:591px;top:221.84px;font-size:12px;color:#000;letter-spacing:-0.15px;">IP Address</div>
<div class="t" style="left:691px;top:221.84px;font-size:12px;color:#000;letter-spacing:-0.2px;">Binding Informa...</div>
<div class="t" style="left:381px;top:243.84px;font-size:12px;color:#000;letter-spacing:-0.1px;">http</div>
<div class="t" style="left:541px;top:243.84px;font-size:12px;color:#000;">80</div>
<div class="t" style="left:591px;top:243.84px;font-size:12px;color:#000;">*</div>
<div class="a" style="left:883px;top:215px;width:103px;height:25px;background:#e1e1e1;border:1px solid #a3a3a3"></div>
<div class="t" style="left:934.5px;top:221.84px;font-size:12px;color:#000;transform:translateX(-50%)">Add...</div>
<div class="a" style="left:883px;top:249px;width:103px;height:24px;background:#cccccc;border:1px solid #bfbfbf"></div>
<div class="t" style="left:934.5px;top:255.84px;font-size:12px;color:#a3a3a3;transform:translateX(-50%)">Edit...</div>
<div class="a" style="left:883px;top:283px;width:103px;height:24px;background:#cccccc;border:1px solid #bfbfbf"></div>
<div class="t" style="left:934.5px;top:289.84px;font-size:12px;color:#a3a3a3;transform:translateX(-50%)">Remove</div>
<div class="a" style="left:883px;top:316px;width:103px;height:24px;background:#cccccc;border:1px solid #bfbfbf"></div>
<div class="t" style="left:934.5px;top:322.84px;font-size:12px;color:#a3a3a3;transform:translateX(-50%)">Browse</div>
<div class="a" style="left:883px;top:507px;width:103px;height:25px;background:#e1e1e1;border:1px solid #adadad"></div>
<div class="t" style="left:934.5px;top:513.84px;font-size:12px;color:#000;transform:translateX(-50%)">Close</div>
<div class="a" style="left:876px;top:208px;width:118px;height:40px;border:3px solid #e6434a;box-shadow:1px 2px 3px rgba(0,0,0,0.22), inset 2px 2px 2px rgba(0,0,0,0.2)"></div>
<svg class="a" style="left:997px;top:211px" width="84" height="34" viewBox="0 0 84 34"><defs><filter id="sh" x="-20%" y="-30%" width="140%" height="160%"><feDropShadow dx="0" dy="1" stdDeviation="1.2" flood-color="#000" flood-opacity="0.3"/></filter></defs>
<path d="M2 16 L31 2 L31 11 L75 11.5 Q80 11.5 80 16.5 Q80 21.5 75 21.5 L31 22 L31 30.5 Z" fill="#ef4347" filter="url(#sh)"/></svg>
<div class="a" style="left:0px;top:728px;width:1366px;height:40px;background:#0b1520"></div>
<svg class="a" style="left:16px;top:740px" width="17" height="17" viewBox="0 0 17 17"><g fill="#fff"><path d="M0 2.3 L7 1.3 L7 7.7 L0 7.7Z"/><path d="M8 1.1 L17 0 L17 7.7 L8 7.7Z"/><path d="M0 8.7 L7 8.7 L7 15.3 L0 14.4Z"/><path d="M8 8.7 L17 8.7 L17 17 L8 15.6Z"/></g></svg>
<div class="a" style="left:48px;top:728px;width:344px;height:40px;background:#f1f1f1;border:1px solid #d8d8d8"></div>
<svg class="a" style="left:60px;top:740px" width="17" height="17" viewBox="0 0 17 17"><circle cx="10.5" cy="6.5" r="5.5" fill="none" stroke="#1b1b1b" stroke-width="1.3"/><path d="M6.7 10.3 L1 16" stroke="#1b1b1b" stroke-width="1.5"/></svg>
<div class="t" style="left:88px;top:740.73px;font-size:14.5px;color:#333;letter-spacing:0.12px;">Type here to search</div>
<svg class="a" style="left:406px;top:740px" width="19" height="16" viewBox="0 0 19 16"><g fill="none" stroke="#fff" stroke-width="1.3"><path d="M0 0.7 L12 0.7 M0 15.3 L12 15.3"/><rect x="2" y="3.6" width="8" height="8.8"/><path d="M15 5 L15 16"/></g><rect x="13.5" y="0.5" width="3" height="3" fill="#fff"/></svg>
<svg class="a" style="left:455px;top:736px" width="24" height="24" viewBox="0 0 24 24"><defs><linearGradient id="eg1" x1="0.2" y1="0.1" x2="0.6" y2="1"><stop offset="0" stop-color="#2fa8e8"/><stop offset="0.6" stop-color="#1c78d8"/><stop offset="1" stop-color="#1450b8"/></linearGradient>
<linearGradient id="eg2" x1="0" y1="0" x2="1" y2="0.3"><stop offset="0" stop-color="#2bb3ea"/><stop offset="0.6" stop-color="#4ccb8a"/><stop offset="1" stop-color="#72d464"/></linearGradient></defs>
<circle cx="12" cy="12" r="11.5" fill="url(#eg1)"/>
<path d="M1.2 10 Q3 0.8 12 0.6 Q21.5 0.8 23.4 10.5 Q23.8 15.5 19.5 16.2 Q15.5 16.5 14 14 Q15.5 12 14.5 10 Q12.5 7 8.5 8.5 Q4 10.5 3.5 15 Q2 13 1.2 10Z" fill="url(#eg2)"/>
<ellipse cx="11.5" cy="12.5" rx="2.6" ry="2.2" fill="#0a1a2a"/>
<path d="M3.5 15 Q4 22 12 23.5 Q7 20.5 7.5 15.5 Q8 12 11 11.5 Q7 10.5 4.5 12.5Z" fill="#1a4fb0" opacity="0.85"/></svg>
<svg class="a" style="left:505px;top:738px" width="22" height="19" viewBox="0 0 22 19"><path d="M0 2 Q0 0.5 1.5 0.5 L7 0.5 L9 2.5 L22 2.5 L22 18 L0 18Z" fill="#e8b63a"/>
<path d="M0 5 L22 5 L22 18 L0 18Z" fill="#f7d575"/>
<path d="M5 10 L17 10 L17 18 L14 18 L14 13 L8 13 L8 18 L5 18Z" fill="#3b8de0"/></svg>
<div class="a" style="left:541px;top:728px;width:48px;height:40px;background:#393f47"></div>
<div class="a" style="left:541px;top:766px;width:48px;height:2px;background:#8ab8e8"></div>
<svg class="a" style="left:552px;top:735px" width="27" height="25" viewBox="0 0 27 25"><defs><linearGradient id="srv" x1="0" y1="0" x2="1" y2="0"><stop offset="0" stop-color="#f2f2f2"/><stop offset="0.5" stop-color="#c9c9c9"/><stop offset="1" stop-color="#8d8d8d"/></linearGradient>
<radialGradient id="glb" cx="40%" cy="35%" r="70%"><stop offset="0" stop-color="#6fb8f0"/><stop offset="1" stop-color="#1f4fa8"/></radialGradient></defs>
<path d="M13 7 L24 7 L25.5 9 L25.5 22 L24 24 L13 24Z" fill="url(#srv)"/>
<rect x="14" y="10" width="6" height="1.3" fill="#777"/><rect x="14" y="13" width="6" height="1.3" fill="#777"/>
<circle cx="10" cy="10" r="9" fill="url(#glb)"/>
<path d="M2 6 Q6 0.5 12 1.5 Q12 5 8 7 Q4 8 2 6Z" fill="#f5b82a"/>
<path d="M3 11 Q8 8 13 10 Q17 12 18 9 Q19 13 15 15 Q10 16 6 15 Q3 14 3 11Z" fill="#3aad3a"/>
<path d="M10 3 Q14 2 17 5 Q15 7 12 6Z" fill="#f0d040"/></svg>
<svg class="a" style="left:1180px;top:742px" width="17" height="11" viewBox="0 0 17 11"><g fill="none" stroke="#fff" stroke-width="1.1"><path d="M3 0 L3 3 M6 0 L6 3"/><path d="M1.5 3 L7.5 3 L7.5 5 Q7.5 7 4.5 7 Q1.5 7 1.5 5Z"/><path d="M4.5 7 L4.5 10"/><rect x="7" y="2.5" width="9" height="7.5"/></g><rect x="8.5" y="4" width="6" height="4.5" fill="#fff"/><rect x="16" y="4.5" width="1" height="3.5" fill="#fff"/></svg>
<svg class="a" style="left:1205px;top:742px" width="17" height="14" viewBox="0 0 17 14"><g fill="none" stroke="#fff" stroke-width="1.1"><rect x="5" y="0.5" width="11" height="8.5"/><path d="M10.5 9 L10.5 12.5 M7 13 L14 13"/><rect x="0.5" y="0.5" width="3.5" height="3"/><path d="M2.2 3.5 L2.2 13"/></g></svg>
<svg class="a" style="left:1229px;top:745px" width="17" height="12" viewBox="0 0 17 12"><path d="M0.5 3.5 L2.5 3.5 L6 0.5 L6 11 L2.5 8 L0.5 8Z" fill="none" stroke="#fff" stroke-width="1"/>
<circle cx="11.5" cy="6.5" r="4.7" fill="#e81123"/><path d="M9.5 4.5 L13.5 8.5 M13.5 4.5 L9.5 8.5" stroke="#fff" stroke-width="1.1"/></svg>
<div class="t" style="left:1281px;top:733.34px;font-size:12px;color:#fff;letter-spacing:-0.1px;transform:translateX(-50%)">3:50 AM</div>
<div class="t" style="left:1281px;top:751.34px;font-size:12px;color:#fff;letter-spacing:-0.1px;transform:translateX(-50%)">1/16/2023</div>
<svg class="a" style="left:1325px;top:739px" width="26" height="26" viewBox="0 0 26 26"><path d="M0.5 0.5 L16.5 0.5 L16.5 11.5 L6 11.5 L3 14.5 L3 11.5 L0.5 11.5Z" fill="#fff"/>
<g stroke="#0b1520" stroke-width="1"><path d="M3 3.5 L14 3.5 M3 6 L14 6 M3 8.5 L11 8.5"/></g>
<circle cx="16" cy="16" r="8" fill="#2b2f35" stroke="#6a6f75" stroke-width="1"/>
<text x="16.2" y="20.2" font-family="Liberation Sans" font-size="11" fill="#fff" text-anchor="middle">1</text></svg>
<div class="a" style="left:1361px;top:728px;width:1px;height:40px;background:#5a6470"></div>
<svg class="a" style="left:184px;top:106px" width="17" height="17" viewBox="0 0 17 17"><defs><linearGradient id="tsv" x1="0" y1="0" x2="1" y2="0"><stop offset="0" stop-color="#e8eaec"/><stop offset="1" stop-color="#9ea4aa"/></linearGradient></defs>
<rect x="9" y="5.5" width="7" height="11" fill="url(#tsv)" stroke="#6f757c" stroke-width="0.8"/>
<rect x="10.5" y="7.5" width="4" height="1.1" fill="#444"/><rect x="10.5" y="10" width="4" height="1.1" fill="#444"/><rect x="10.3" y="12.8" width="4.5" height="3.2" fill="#8fae5a"/><defs><radialGradient id="glg10" cx="38%" cy="32%" r="72%"><stop offset="0" stop-color="#a8dcfa"/><stop offset="0.45" stop-color="#3a8ad6"/><stop offset="1" stop-color="#143c80"/></radialGradient>
<linearGradient id="gll10" x1="0" y1="0" x2="0" y2="1"><stop offset="0" stop-color="#6fd46a"/><stop offset="1" stop-color="#1f8a2a"/></linearGradient></defs>
<circle cx="6.5" cy="6.5" r="5.8" fill="url(#glg10)"/>
<path d="M1.86 4.95 Q3.79 1.86 6.89 2.40 Q8.05 3.79 6.50 5.34 Q4.57 6.73 2.40 6.89Z" fill="url(#gll10)"/>
<path d="M7.27 7.66 Q9.98 6.50 11.99 8.05 Q11.14 11.14 8.43 11.76 Q6.89 9.98 7.27 7.66Z" fill="url(#gll10)"/>
<path d="M9.21 2.25 Q11.14 3.41 11.68 5.34 Q10.37 5.49 9.36 4.18Z" fill="#4fbf4a"/><path d="M1.32 5.34 Q1.86 1.86 5.34 1.16 Q7.27 1.47 7.04 3.41 Q4.57 3.64 3.41 6.11Z" fill="#f5c02a"/></svg>
<div class="a" style="left:1001px;top:305px;width:4px;height:14px;border:1px solid #8a8a8a;border-left:none;background:#fafafa"></div>
<div class="a" style="left:1001px;top:400px;width:3px;height:6px;background:#7a7a7a;opacity:0.6"></div>
<div class="a" style="left:1001px;top:440px;width:2px;height:10px;background:#333"></div>
<div class="a" style="left:1001px;top:484px;width:4px;height:13px;border:1px solid #8a8a8a;border-left:none;background:#fafafa"></div>
</body></html>
